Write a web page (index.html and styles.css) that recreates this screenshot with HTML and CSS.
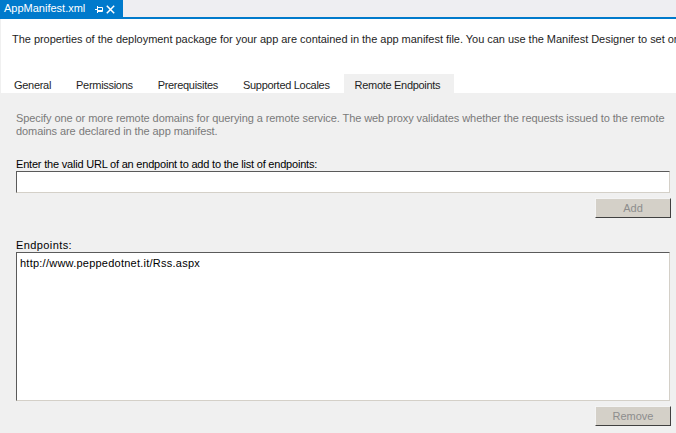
FILE: index.html
```html
<!DOCTYPE html>
<html>
<head>
<meta charset="utf-8">
<link rel="stylesheet" href="styles.css">
</head>
<body>
<div class="doc-tabs">
  <div class="doc-tab">
    <span class="doc-title">AppManifest.xml</span>
    <svg class="pin" width="8" height="7" viewBox="0 0 8 7"><path d="M0 3.5h2.5M2.5 0v7M2.5 1.5h5v4h-5M2.5 4.5h5" stroke="#fff" stroke-width="1" fill="none"/></svg>
    <svg class="close" width="9" height="9" viewBox="0 0 9 9"><path d="M0.8 0.8l7.4 7.4M8.2 0.8l-7.4 7.4" stroke="#fff" stroke-width="1.5"/></svg>
  </div>
</div>
<div class="doc-line"></div>
<div class="header">
  <p class="intro">The properties of the deployment package for your app are contained in the app manifest file. You can use the Manifest Designer to set or modify one or more of the properties.</p>
  <div class="tabs">
    <div class="tab">General</div>
    <div class="tab">Permissions</div>
    <div class="tab">Prerequisites</div>
    <div class="tab pre-active">Supported Locales</div>
    <div class="tab active">Remote Endpoints</div>
  </div>
</div>
<div class="panel">
  <p class="hint">Specify one or more remote domains for querying a remote service. The web proxy validates whether the requests issued to the remote domains are declared in the app manifest.</p>
  <div class="label first">Enter the valid URL of an endpoint to add to the list of endpoints:</div>
  <div class="input"></div>
  <div class="btn-row"><div class="btn">Add</div></div>
  <div class="label second">Endpoints:</div>
  <div class="list"><div class="item">http://www.peppedotnet.it/Rss.aspx</div></div>
  <div class="btn-row"><div class="btn">Remove</div></div>
</div>
</body>
</html>
```
FILE: styles.css
```css
html, body {
  margin: 0;
  padding: 0;
  width: 676px;
  height: 433px;
  overflow: hidden;
  background: #f0f0f0;
  font-family: "Liberation Sans", "DejaVu Sans", sans-serif;
}
.doc-tabs {
  height: 17px;
  background: #eeeef2;
  display: flex;
}
.doc-tab {
  width: 123px;
  background: #007acc;
  color: #fff;
  display: flex;
  align-items: center;
  padding-left: 4px;
  box-sizing: border-box;
}
.doc-title {
  font-size: 11px;
  line-height: 17px;
  margin-right: 10px;
}
.pin { margin-right: 3px; margin-top: 1px; }
.close { margin-top: 1px; }
.doc-line {
  height: 2px;
  background: #007acc;
}
.header {
  background: #fff;
  height: 74px;
  display: flex;
  flex-direction: column;
  border-left: 1px solid #f0f0f0;
  box-sizing: border-box;
  overflow: hidden;
}
.intro {
  margin: 13px 0 0 11px;
  font-size: 11px;
  line-height: 14px;
  white-space: nowrap;
  color: #1e1e1e;
  letter-spacing: -0.03px;
}
.tabs {
  margin-top: auto;
  display: flex;
  height: 19px;
  padding-left: 1px;
}
.tab {
  padding: 3px 13px 0 12px;
  font-size: 11px;
  line-height: 16px;
  letter-spacing: -0.3px;
  box-sizing: border-box;
  color: #1e1e1e;
}
.tab.pre-active {
  padding-right: 14px;
}
.tab.active {
  background: #f0f0f0;
  padding: 3px 14px 0 11px;
}
.panel {
  padding: 0 6px 0 16px;
  display: flex;
  flex-direction: column;
  font-size: 11px;
}
.hint {
  margin: 19px 0 0;
  color: #7a7a7a;
  line-height: 13px;
  letter-spacing: -0.08px;
}
.label {
  color: #000;
  line-height: 13px;
}
.label.first { margin-top: 20px; letter-spacing: -0.2px; }
.label.second { margin-top: 21px; letter-spacing: 0.4px; }
.input {
  height: 22px;
  background: #fff;
  border: 1px solid;
  border-color: #5a5a5a #d4d0c8 #d4d0c8 #5a5a5a;
  box-sizing: border-box;
}
.btn-row {
  display: flex;
  justify-content: flex-end;
  margin-top: 5px;
}
.btn {
  width: 76px;
  height: 20px;
  box-sizing: border-box;
  background: #d4d0c8;
  border: 1px solid;
  border-color: #f4f4f4 #404040 #404040 #f4f4f4;
  color: #8d8d8d;
  text-align: center;
  line-height: 18px;
  margin-right: -1px;
}
.list {
  height: 149px;
  background: #fff;
  border: 1px solid;
  border-color: #5a5a5a #d4d0c8 #d4d0c8 #5a5a5a;
  box-sizing: border-box;
  padding: 4px 3px;
}
.item {
  line-height: 13px;
  color: #000;
  letter-spacing: 0.24px;
}
```
